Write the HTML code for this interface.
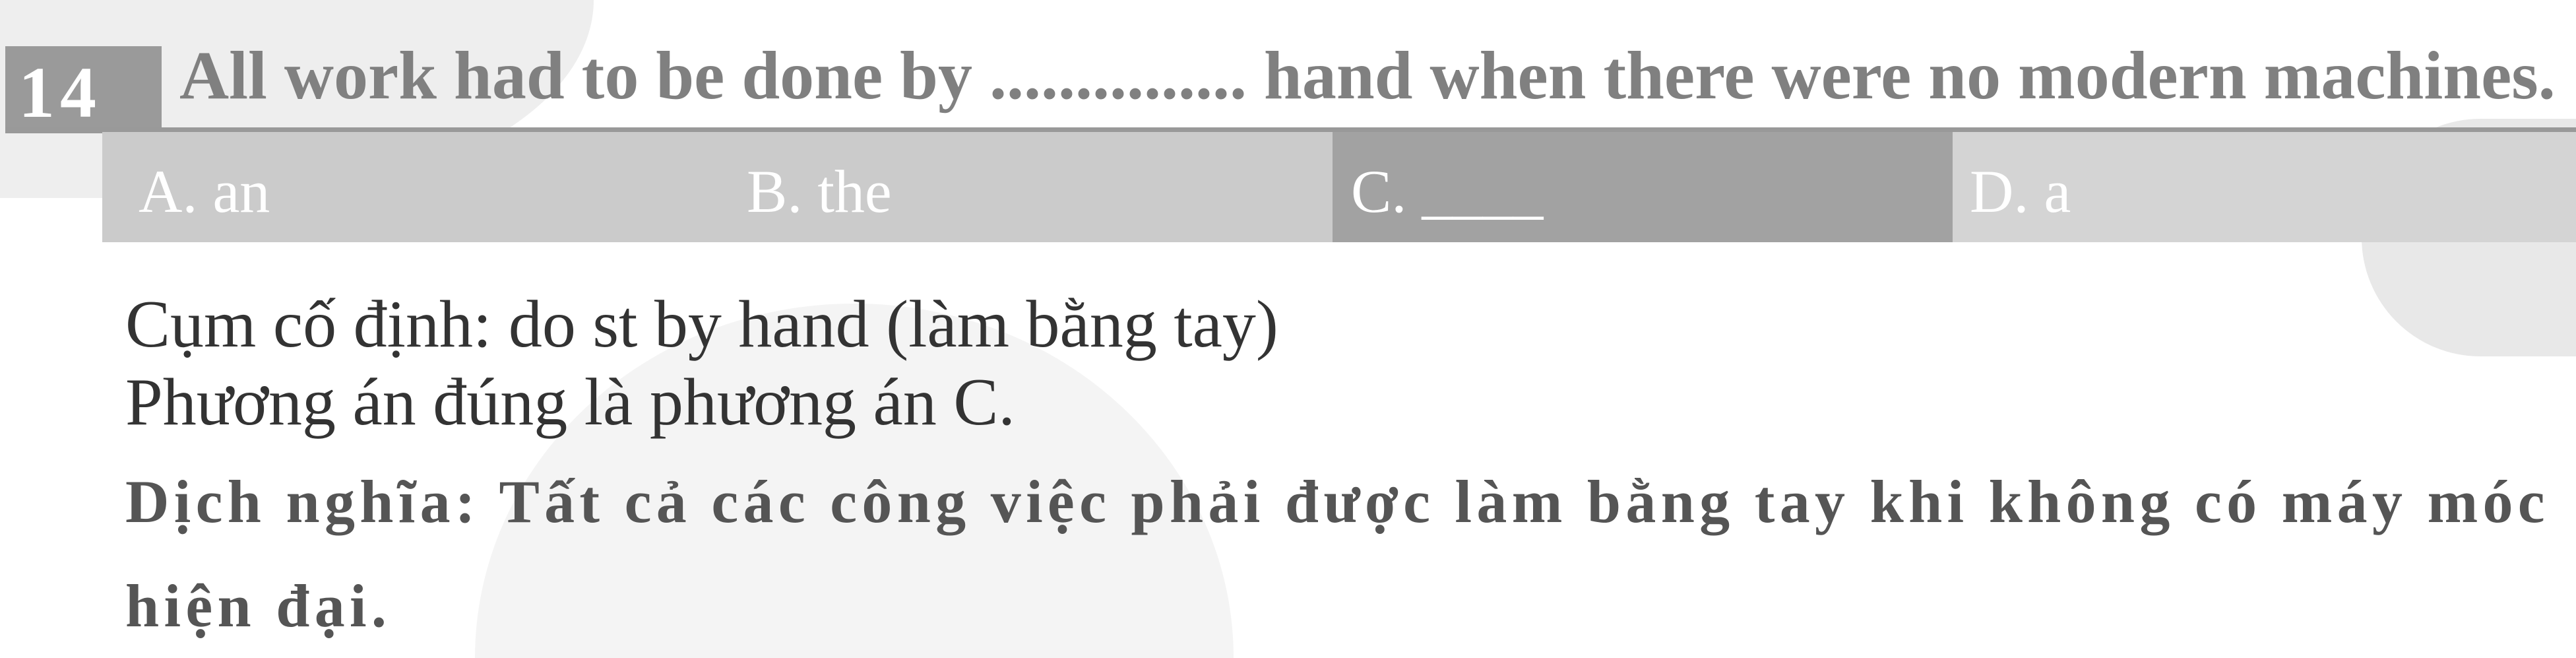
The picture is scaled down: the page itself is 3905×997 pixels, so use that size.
<!DOCTYPE html>
<html style="height:997px;overflow:hidden"><head><meta charset="utf-8"><style>
html,body{margin:0;padding:0}
body{width:3905px;height:997px;position:relative;overflow:hidden;background:#fff;font-family:"Liberation Serif",serif}
.a{position:absolute;white-space:nowrap}
</style></head><body>
<div class="a" style="left:0;top:0;width:3905px;height:997px;overflow:hidden">
<div class="a" style="left:0;top:0;width:900px;height:300px;border-radius:0 0 60% 0/0 0 100% 0;background:#eeeeee"></div>
<div class="a" style="left:720px;top:460px;width:1150px;height:537px;border-radius:50% 50% 0 0/100% 100% 0 0;background:#f4f4f4"></div>
<div class="a" style="left:3580px;top:180px;width:325px;height:360px;border-radius:180px 0 0 180px;background:#e8e8e8"></div>
</div>
<div class="a" style="left:8px;top:70px;width:237px;height:132px;background:#9a9a9a"></div>
<div class="a" style="left:28px;top:80px;font-size:110px;font-weight:bold;color:#fff;line-height:120px;letter-spacing:8px">14</div>
<div class="a" style="left:8px;top:193px;width:3897px;height:9px;background:#999"></div>
<div class="a" style="left:272px;top:55px;font-size:104px;font-weight:bold;color:#808080;line-height:120px">All work had to be done by ............... hand when there were no modern machines.</div>
<div class="a" style="left:155px;top:200px;width:1865px;height:167px;background:#cbcbcb"></div>
<div class="a" style="left:2020px;top:200px;width:940px;height:167px;background:#a2a2a2"></div>
<div class="a" style="left:2960px;top:200px;width:945px;height:167px;background:#d4d4d4"></div>
<div class="a" style="left:210px;top:240px;font-size:92px;color:#fff;line-height:100px">A. an</div>
<div class="a" style="left:1132px;top:240px;font-size:92px;color:#fff;line-height:100px">B. the</div>
<div class="a" style="left:2048px;top:240px;font-size:92px;color:#fff;line-height:100px">C. ____</div>
<div class="a" style="left:2986px;top:240px;font-size:92px;color:#fff;line-height:100px">D. a</div>
<div class="a" style="left:190px;top:432px;font-size:102px;color:#333;line-height:120px">Cụm cố định: do st by hand (làm bằng tay)</div>
<div class="a" style="left:190px;top:550px;font-size:102px;color:#333;line-height:120px">Phương án đúng là phương án C.</div>
<div class="a" style="left:190px;top:705px;font-size:92px;font-weight:bold;color:#555;letter-spacing:7.3px;line-height:110px">Dịch nghĩa: Tất cả các công việc phải được làm bằng tay khi không có máy móc</div>
<div class="a" style="left:190px;top:863px;font-size:92px;font-weight:bold;color:#555;letter-spacing:7.3px;line-height:110px">hiện đại.</div>
</body></html>
